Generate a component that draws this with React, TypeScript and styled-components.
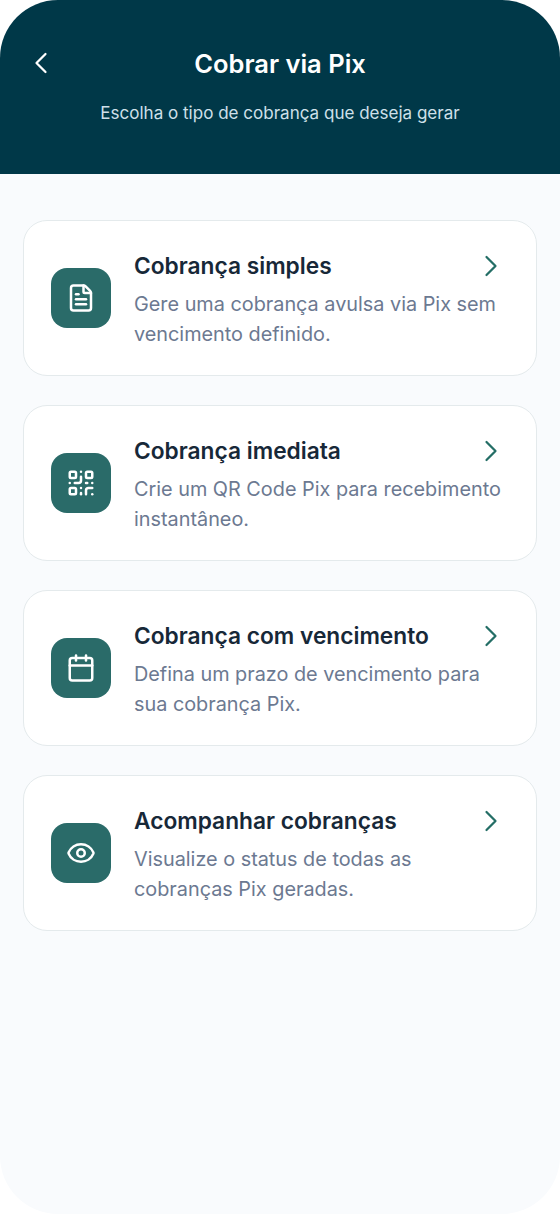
import React from 'react';
import styled, { createGlobalStyle } from 'styled-components';
import { Calendar, ChevronLeft, ChevronRight, Eye, FileText, QrCode, type LucideIcon } from 'lucide-react';

const GlobalStyle = createGlobalStyle`
  * { box-sizing: border-box; }
  body { margin: 0; background: #ffffff; font-family: Inter, sans-serif; }
  h1, p { margin: 0; }
  button { border: 0; padding: 0; background: none; font: inherit; text-align: left; cursor: pointer; }
  svg { display: block; }
`;

const Screen = styled.div`
  display: flex;
  flex-direction: column;
  width: 560px;
  height: 1214px;
  overflow: hidden;
  border-radius: 58px;
  background: #f9fbfd;
`;

const Header = styled.header`
  height: 174px;
  flex: none;
  padding: 45px 23px 0;
  background: #003848;
  text-align: center;
`;

const TitleBar = styled.div`
  display: grid;
  grid-template-columns: 36px 1fr 36px;
  align-items: start;
  height: 36px;
`;

const BackButton = styled.button`
  color: #ffffff;
`;

const PageTitle = styled.h1`
  padding-top: 1px;
  font-size: 25.5px;
  line-height: 36px;
  font-weight: 600;
  color: #ffffff;
`;

const Subtitle = styled.p`
  margin-top: 19px;
  font-size: 17.05px;
  line-height: 26px;
  color: #cfe0ea;
`;

const Options = styled.main`
  display: flex;
  flex-direction: column;
  gap: 29px;
  padding: 46px 23px 0;
`;

const Card = styled.button`
  display: flex;
  align-items: center;
  gap: 23px;
  height: 156px;
  padding: 0 27px;
  border: 1.5px solid #e4eaec;
  border-radius: 24px;
  background: #ffffff;
`;

const IconTile = styled.span`
  display: grid;
  place-items: center;
  flex: none;
  width: 60px;
  height: 60px;
  padding-left: 0.6px;
  border-radius: 16px;
  background: #2a6b69;
  color: #ffffff;
`;

const CardBody = styled.span`
  display: flex;
  flex: 1;
  flex-direction: column;
  gap: 5px;
`;

const CardHeading = styled.span`
  display: flex;
  align-items: center;
  justify-content: space-between;
  height: 36px;
  color: #246e66;
`;

const CardTitle = styled.span`
  font-size: 22.72px;
  line-height: 36px;
  font-weight: 600;
  color: #172838;
`;

const Description = styled.span`
  font-size: 19.83px;
  line-height: 30px;
  white-space: pre;
  color: #6c7991;
`;

interface Option {
  icon: LucideIcon;
  title: string;
  description: string;
}

const options: Option[] = [
  { icon: FileText, title: 'Cobrança simples', description: 'Gere uma cobrança avulsa via Pix sem\nvencimento definido.' },
  { icon: QrCode, title: 'Cobrança imediata', description: 'Crie um QR Code Pix para recebimento\ninstantâneo.' },
  { icon: Calendar, title: 'Cobrança com vencimento', description: 'Defina um prazo de vencimento para\nsua cobrança Pix.' },
  { icon: Eye, title: 'Acompanhar cobranças', description: 'Visualize o status de todas as\ncobranças Pix geradas.' },
];

export default function App() {
  return (
    <>
      <GlobalStyle />
      <Screen>
        <Header>
          <TitleBar>
            <BackButton aria-label="Voltar">
              <ChevronLeft size={36} strokeWidth={1.5} />
            </BackButton>
            <PageTitle>Cobrar via Pix</PageTitle>
          </TitleBar>
          <Subtitle>Escolha o tipo de cobrança que deseja gerar</Subtitle>
        </Header>
        <Options>
          {options.map(({ icon: Icon, title, description }) => (
            <Card key={title}>
              <IconTile>
                <Icon size={30} strokeWidth={2} />
              </IconTile>
              <CardBody>
                <CardHeading>
                  <CardTitle>{title}</CardTitle>
                  <ChevronRight size={36} strokeWidth={1.5} />
                </CardHeading>
                <Description>{description}</Description>
              </CardBody>
            </Card>
          ))}
        </Options>
      </Screen>
    </>
  );
}
